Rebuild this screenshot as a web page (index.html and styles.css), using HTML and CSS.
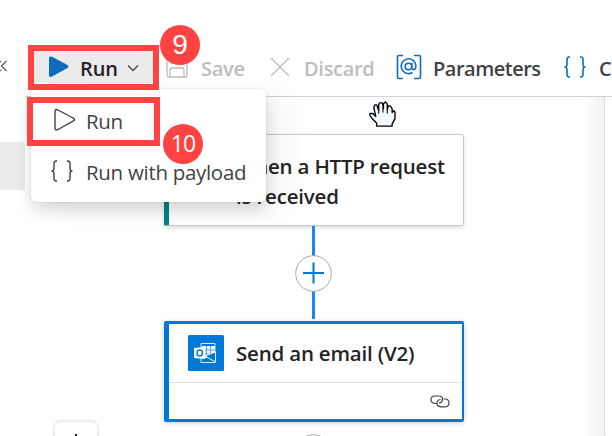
FILE: index.html
```html
<!DOCTYPE html>
<html lang="en">
<head>
<meta charset="utf-8">
<title>Workflow designer</title>
<link rel="stylesheet" href="styles.css">
</head>
<body>
<div class="app">
  <aside class="rail">
    <svg class="collapse" width="8" height="14" viewBox="0 0 8 14"><path d="M1 2L-4 7L1 12M6.500 2L1.500 7L6.500 12"/></svg>
    <div class="rail-selected"></div>
  </aside>
  <main class="main">
    <header class="toolbar">
      <button class="tool run">
        <svg width="22" height="24" viewBox="0 0 22 24"><path d="M1 3.500Q1 .5 4 1.800L19 9.800Q22 11.500 19 13.200L4 21.500Q1 22.800 1 20Z" fill="#0f6cbd"/></svg>
        <span>Run</span>
        <svg class="caret" width="12" height="8" viewBox="0 0 12 8"><path d="M1 1.500L6 6.500L11 1.500"/></svg>
      </button>
      <button class="tool save disabled">
        <svg width="22" height="22" viewBox="0 0 22 22"><path d="M3 1H16L21 6V19Q21 21 19 21H3Q1 21 1 19V3Q1 1 3 1ZM5 1V7H15V1M4 21V14Q4 12 6 12H16Q18 12 18 14V21"/></svg>
        <span>Save</span>
      </button>
      <button class="tool discard disabled">
        <svg width="20" height="20" viewBox="0 0 20 20"><path d="M1 1L19 19M19 1L1 19"/></svg>
        <span>Discard</span>
      </button>
      <button class="tool parameters">
        <svg width="26" height="26" viewBox="0 0 26 26"><path d="M7 1.500H3Q1.500 1.500 1.500 3V23Q1.500 24.500 3 24.500H7M18 1.500H23Q24.500 1.500 24.500 3V23Q24.500 24.500 23 24.500H18"/><circle cx="12.500" cy="12.500" r="3.300"/><path d="M15.800 9V13.500Q16 16 18 15.500Q20 14.500 20 12A7.400 7.400 0 1 0 16.500 18.500"/></svg>
        <span>Parameters</span>
      </button>
      <button class="tool code">
        <svg width="22" height="22" viewBox="0 0 22 22"><path d="M6 1H5Q3 1 3 4V8Q3 11 1 11Q3 11 3 14V18Q3 21 5 21H6M16 1H17Q19 1 19 4V8Q19 11 21 11Q19 11 19 14V18Q19 21 17 21H16"/></svg>
        <span>C</span>
      </button>
    </header>
    <div class="workspace">
      <section class="canvas">
        <article class="node trigger"><h2>When a HTTP request<br>is received</h2></article>
        <div class="edge"></div>
        <svg class="add" width="37" height="37" viewBox="0 0 37 37"><circle cx="18.500" cy="18.500" r="17.800"/><path d="M8 18H29M18.500 7.500V28.500"/></svg>
        <article class="node email">
          <div class="email-head">
            <svg width="36" height="36" viewBox="0 0 36 36"><rect width="36" height="36" rx="1.500" fill="#0078d7"/><path d="M13 8.500H27V27.500H13Z" fill="none" stroke="#d9ebfa"/><path d="M14 11H27V21L19 23H14Z" fill="#eff8ff"/><path d="M18.500 11V20M22.500 11V20M15 15H27M16 19H27" stroke="#57a6e5"/><path d="M17 21L27.500 17V27Z" fill="#0078d7" stroke="#eff8ff"/><path d="M6 13L17 12V24L6 23Z" fill="#fff"/><ellipse cx="11.700" cy="18" rx="2.700" ry="3" fill="none" stroke="#0078d7" stroke-width="1.500"/></svg>
            <h2>Send an email (V2)</h2>
          </div>
          <div class="email-foot"><svg width="20" height="13" viewBox="0 0 20 13"><path d="M6.500 8.500H5Q1 8 1 4.600Q1 1 5 1H9Q12.500 1 12.500 4.200Q12.500 7.500 9 8M13.500 4H15Q19 4.200 19 8Q19 11.500 15 11.800H11Q7 11.500 7 8.300Q7 5 10.500 4.500"/></svg></div>
        </article>
        <svg class="add next" width="37" height="37" viewBox="0 0 37 37"><circle cx="18.500" cy="18.500" r="17.800"/></svg>
        <div class="zoom-controls"><i></i></div>
        <svg class="hand" width="27" height="27" viewBox="0 0 28 28"><path d="M8 26V23L4 19L1 15V13H4L7 16L5 7L6 4H8L10 10V4L11 2H14L15 8V3L17 1L19 3V9L20 5H22L24 8V12L26 10L27 12V18L24 24V26Z" fill="#f2f9ff" stroke="#000" stroke-width="1.400"/><path d="M10 8V13M14.500 6V12M19 7V13" stroke="#222" stroke-width="1.300"/></svg>
      </section>
      <aside class="panel"></aside>
    </div>
  </main>
  <div class="menu">
    <div class="menu-item"><svg width="22" height="24" viewBox="0 0 22 24"><path d="M1 3.500Q1 .5 4 2L19 10Q22 11.500 19 13.200L4 21.500Q1 22.800 1 20Z"/></svg><span>Run</span></div>
    <div class="menu-item"><svg width="22" height="22" viewBox="0 0 22 22"><path d="M6 1H5Q3 1 3 4V8Q3 11 1 11Q3 11 3 14V18Q3 21 5 21H6M16 1H17Q19 1 19 4V8Q19 11 21 11Q19 11 19 14V18Q19 21 17 21H16"/></svg><span>Run with payload</span></div>
  </div>
  <div class="outline first"></div>
  <div class="outline second"></div>
  <div class="step nine">9</div>
  <div class="step ten">10</div>
</div>
</body>
</html>
```

FILE: styles.css
```css
* { box-sizing: border-box; }
body { margin: 0; overflow: hidden; background: #fff; color: #242424; font-family: "Open Sans", "Noto Sans", sans-serif; }
svg { display: block; flex: none; overflow: visible; fill: none; stroke-linejoin: round; }
.app { position: relative; display: flex; width: 612px; height: 436px; overflow: hidden; }
.rail { width: 25px; flex: none; padding-top: 59px; }
.collapse { overflow: hidden; stroke: #555; stroke-width: 1.1; }
.rail-selected { height: 48px; margin-top: 69px; background: #edebe9; }
.main { width: 587px; display: flex; flex-direction: column; }
.toolbar { height: 97px; flex: none; display: flex; padding: 51px 0 13px 9px; overflow: hidden; border-bottom: 1px solid #d1d1d1; }
.tool { flex: none; display: flex; align-items: center; border: 0; padding: 0; background: none; color: #424242; font: 540 20px/30px "Open Sans", sans-serif; white-space: nowrap; text-align: left; }
.tool span { padding-top: 3px; }
.run { width: 119px; height: 32px; padding-left: 14px; background: #ebebeb; color: #242424; }
.run span { width: 47px; padding-left: 10px; letter-spacing: -.1px; }
.run .caret { margin: 2px 0 0 10px; stroke: #424242; stroke-width: 1.2; }
.save { width: 117px; padding-left: 13px; gap: 13px; letter-spacing: -.3px; }
.discard { width: 126px; gap: 14px; letter-spacing: -.3px; }
.disabled { color: #bdbdbd; }
.disabled svg { stroke: #bdbdbd; stroke-width: 1.3; }
.parameters { width: 168px; gap: 11px; letter-spacing: -.5px; }
.parameters svg, .code svg { stroke: #0f6cbd; stroke-width: 1.6; }
.code { width: 48px; gap: 13px; }
.workspace { flex: 1; display: flex; overflow: hidden; }
.canvas { position: relative; width: 579px; flex: none; background: linear-gradient(90deg, transparent 555px, #f3f3f3 579px), #fff; overflow: hidden; }
.panel { width: 8px; border-left: 1px solid #ddd; background: #fff; }
.node { position: absolute; left: 139px; width: 300px; background: #fff; border-radius: 2px; }
.node h2 { margin: 0; font: 540 20.5px/30px "Open Sans", sans-serif; letter-spacing: -.2px; white-space: nowrap; }
.trigger { top: 37px; height: 92px; padding: 16px 0 0 67px; border: 1px solid #c8c8c8; border-left: 5px solid #038387; box-shadow: 0 2px 4px #0002; }
.edge { position: absolute; left: 287px; top: 129px; width: 3px; height: 93px; background: #1a85ff; }
.add { position: absolute; left: 270px; top: 158px; }
.add circle { fill: #fff; stroke: #aaa; }
.add path { stroke: #0078d4; stroke-width: 2; }
.add.next { top: 337px; }
.email { top: 224px; height: 101px; border: 3px solid #0078d4; border-right-width: 2px; border-left-width: 5px; box-shadow: 0 1px 5px #0003; }
.email-head { height: 59px; display: flex; align-items: center; gap: 12px; padding: 0 0 1px 19px; border-bottom: 1px solid #e1e1e1; }
.email-foot { height: 36px; display: flex; justify-content: flex-end; align-items: center; padding-right: 12px; }
.email-foot svg { stroke: #424242; stroke-width: 1.2; }
.zoom-controls { position: absolute; left: 30px; top: 325px; width: 42px; height: 60px; border-radius: 6px; background: #fff; box-shadow: 0 0 4px #0003; display: flex; justify-content: center; padding-top: 12px; }
.zoom-controls i { width: 2px; height: 12px; background: #222; }
.hand { position: absolute; left: 344px; top: 4px; }
.menu { position: absolute; left: 31px; top: 89px; width: 235px; height: 113px; padding: 6px 0 0 20px; border-radius: 6px; background: #fff; box-shadow: 0 8px 16px #00000024, 0 0 2px #0002, 20px 8px 30px #0000000b; }
.menu-item { height: 51px; display: flex; align-items: center; gap: 13px; color: #424242; font-size: 20.500px; line-height: 30px; letter-spacing: -.3px; white-space: nowrap; }
.menu-item svg { margin-top: -2px; stroke: #424242; stroke-width: 1.4; }
.menu-item:first-child svg { margin: -2px -3px 0 3px; }
.outline { position: absolute; border: 6px solid #ff4343; }
.first { left: 28px; top: 45px; width: 131px; height: 45px; }
.second { left: 27px; top: 97px; width: 133px; height: 49px; }
.step { position: absolute; width: 40px; height: 40px; border-radius: 50%; background: #ff4343; color: #fff; text-align: center; font: 28px/40px "Liberation Sans", sans-serif; }
.nine { left: 160px; top: 25px; }
.ten { left: 163px; top: 124px; font: 23px/39px "Open Sans", sans-serif; letter-spacing: -.8px; }
```
